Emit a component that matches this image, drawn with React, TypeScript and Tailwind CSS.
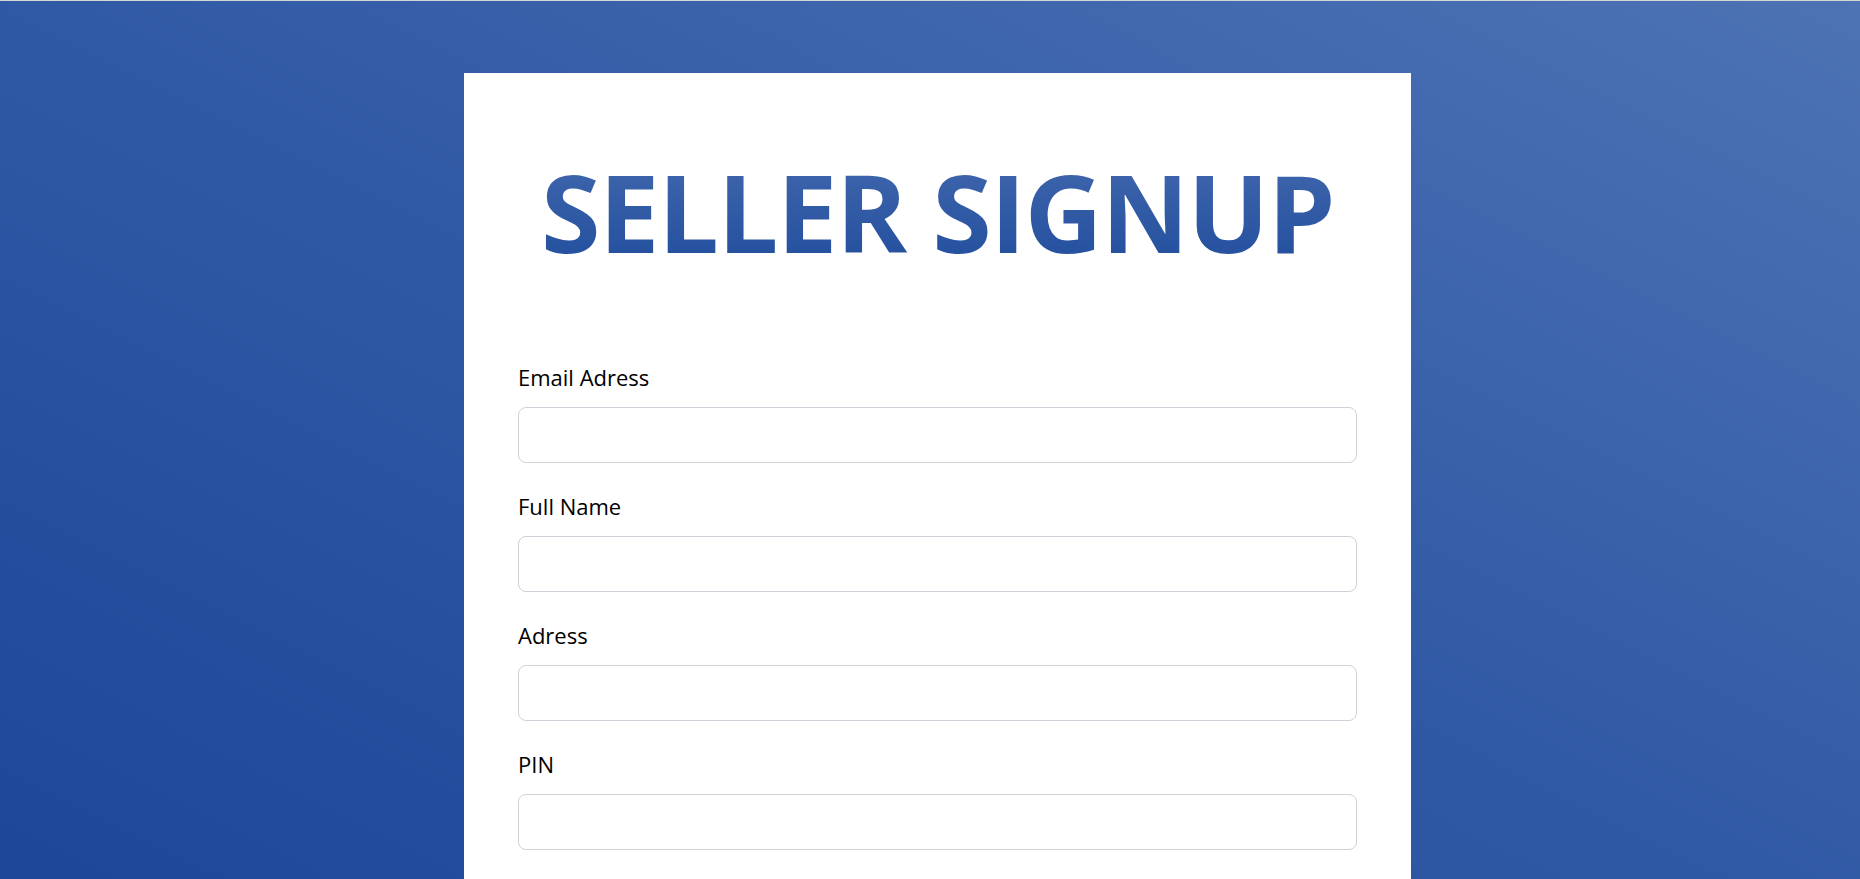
import React from "react";

const fields = ["Email Adress", "Full Name", "Adress", "PIN"];

export default function App() {
  return (
    <div
      className="min-h-screen w-full border-t border-[#d6d6d6] bg-gradient-to-tr from-[#1b4697] via-[#3059a5] to-[#4d73b4] flex justify-center pl-[15px] pt-[72px]"
      style={{ fontFamily: '"Open Sans", "Noto Sans", sans-serif' }}
    >
      <div className="w-[947px] bg-white px-[54px] pt-[74px] pb-[60px] flex flex-col">
        <h1 className="text-center text-[108px] leading-[1.2] font-bold tracking-[-1.5px] bg-gradient-to-b from-[#4369ae] to-[#1f4c9c] bg-clip-text text-transparent">
          SELLER SIGNUP
        </h1>
        <div className="mt-[84px] flex flex-col">
          {fields.map((f) => (
            <div key={f} className="flex flex-col mb-[27px]">
              <label className="text-[22px] leading-[33px] text-black">{f}</label>
              <input
                type="text"
                className="mt-[13px] h-[56px] w-full rounded-[8px] border border-[#ced3da] bg-white px-3 outline-none"
              />
            </div>
          ))}
        </div>
      </div>
    </div>
  );
}
